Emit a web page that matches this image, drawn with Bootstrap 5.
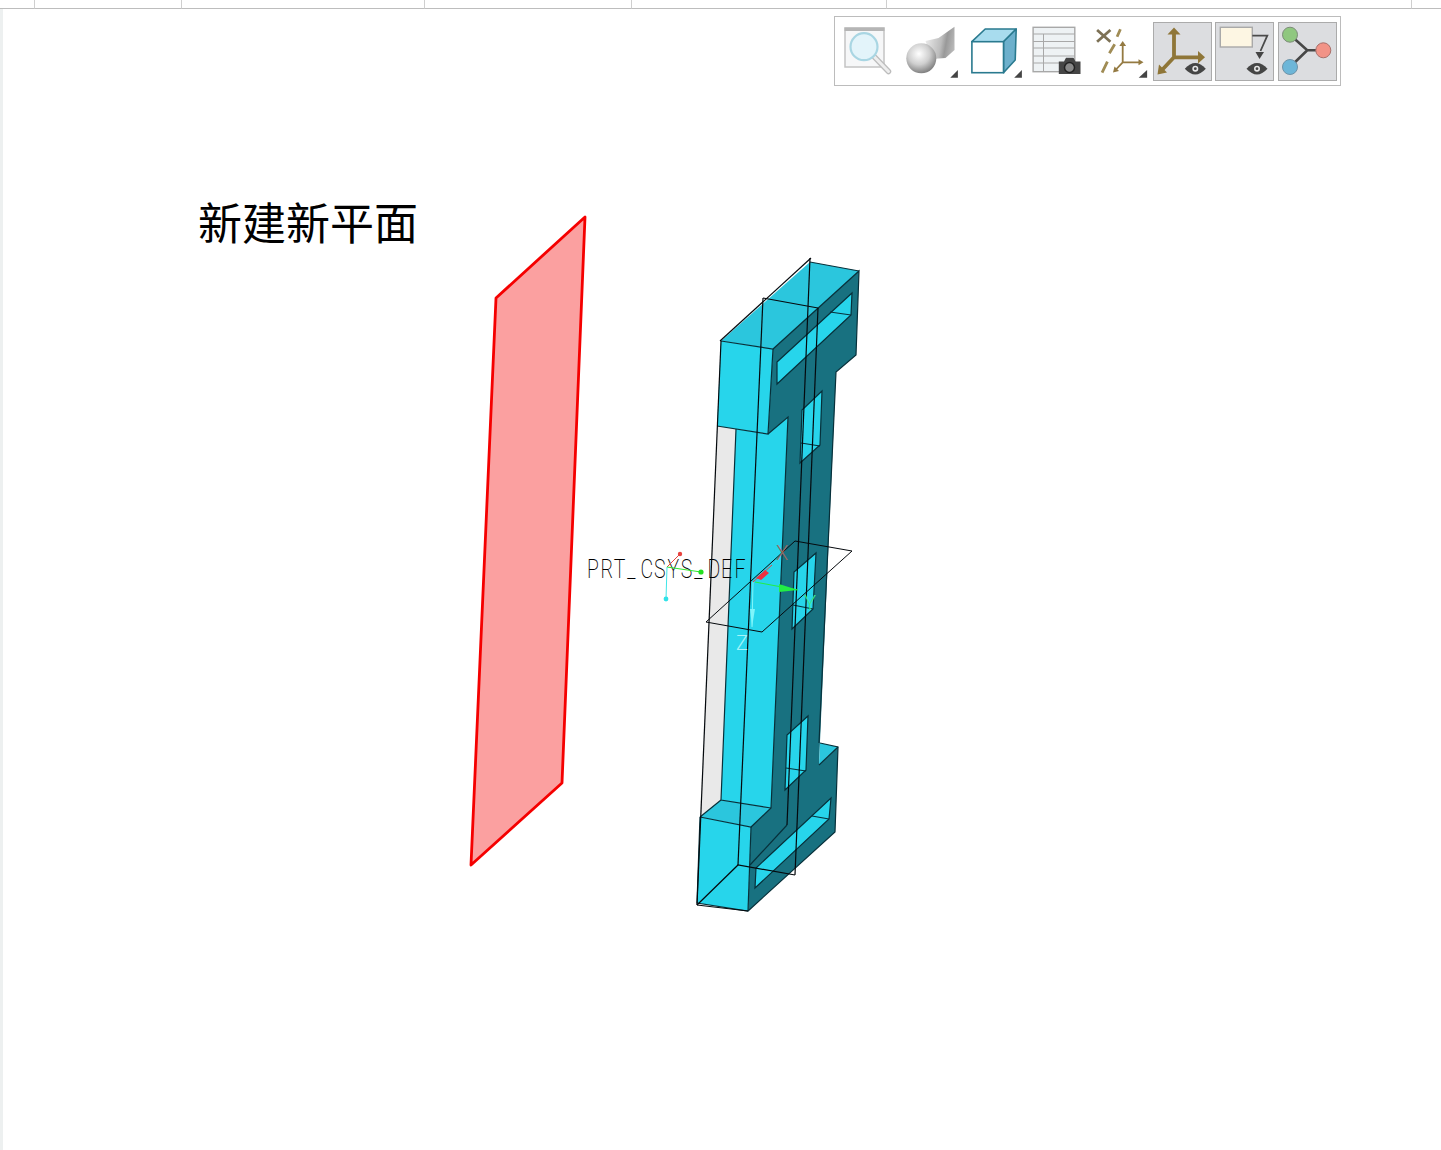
<!DOCTYPE html>
<html lang="zh">
<head>
<meta charset="utf-8">
<title>新建新平面</title>
<link href="https://cdn.jsdelivr.net/npm/bootstrap@5.3.0/dist/css/bootstrap.min.css" rel="stylesheet">
<style>
html,body{margin:0;background:#fff;overflow:hidden}
.sheet{width:1441px;height:1150px;font-family:"Noto Sans CJK SC","Liberation Sans",sans-serif}
.ruler-cell{height:9px;border-bottom:1px solid #bdbdbd;border-right:1px solid #cfcfcf;flex:none}
.ruler-rest{flex:1 1 auto;border-right:0}
.work-area{height:1141px;border-left:3px solid #edf0f0;padding-top:7px;padding-right:100px;z-index:1}
.tool-strip{width:507px;height:70px;border:1px solid #bcbcbc;padding:5px 3.5px 4px 6px;background:#fff;gap:3.4px;margin-left:auto}
.tool-btn{width:59px;height:59px;padding:0;border:1px solid transparent;border-radius:0;background:transparent;flex:none}
.tool-btn svg{display:block;width:59px;height:59px;margin:-1px}
.tool-btn.is-on{background:#dcdde0;border-color:#ababab}
.page-title{font-size:44px;line-height:1;font-weight:400;color:#000;margin:113px 0 0 195px;letter-spacing:0}
.scene{width:1441px;height:1150px;z-index:0}
.wire{fill:none;stroke:#05090d;stroke-width:1.2}
.edge{stroke:#07303a;stroke-width:1.2}
.csys-label{font-family:"Roboto","Liberation Sans",sans-serif;font-weight:200;font-size:25px;fill:#000}
.axis-letter{font-family:"Roboto","Liberation Sans",sans-serif;font-weight:300;font-size:20px}
</style>
</head>
<body>
<div class="sheet position-relative">
  <svg class="scene position-absolute top-0 start-0" viewBox="0 0 1441 1150" aria-label="3D model">
    <!-- datum plane -->
    <polygon points="496,298 585,217 562,783 471,865" fill="#fba0a0" stroke="#f50000" stroke-width="2.800" stroke-linejoin="round"/>

    <!-- part faces -->
    <polygon points="717,426 736,429 721,800 700,817" fill="#e9e9e9"/>
    <polygon points="736,429 768,434 788,417 771,808 721,800" fill="#27d5eb"/>
    <polygon points="773,349 859,271 856,355 836,372 819,765 838,747 835,832 748,911 751,827 771,808 788,417 768,434" fill="#187180"/>
    <polygon points="820,743 838,747 819,765" fill="#2bc6dd"/>
    <polygon points="721,341 810,262 859,271 773,349" fill="#2bc6dd"/>
    <polygon points="721,341 773,349 768,434 717,426" fill="#27d5eb"/>
    <polygon points="721,800 771,808 751,827 700,817" fill="#2bc6dd"/>
    <polygon points="700,817 751,827 748,911 697,903" fill="#27d5eb"/>
    <polygon points="777,362 852,293 851,315 777,384" fill="#27d5eb"/>
    <polygon points="822,391 820,445 800,463 802,410" fill="#27d5eb"/>
    <polygon points="816,553 813,609 792,629 794,572" fill="#27d5eb"/>
    <polygon points="808,716 806,770 785,790 787,735" fill="#27d5eb"/>
    <polygon points="831,798 829,819 755,888 756,868" fill="#27d5eb"/>

    <!-- model edges -->
    <g class="edge" fill="none">
      <polyline points="721,341 773,349 859,271 856,355 836,372 819,743"/>
      <polyline points="773,349 768,434 717,426"/>
      <polyline points="768,434 788,417 771,808 751,827 700,817"/>
      <polyline points="736,429 721,800 771,808"/>
      <polyline points="810,262 859,271"/>
      <polyline points="820,743 838,747 835,832 748,911 697,903 700,817"/>
      <polyline points="819,765 838,747"/>
      <line x1="751" y1="827" x2="748" y2="911"/>
      <line x1="721" y1="800" x2="700" y2="817"/>
      <polygon points="777,362 852,293 851,315 777,384"/>
      <polygon points="822,391 820,445 800,463 802,410"/>
      <polygon points="816,553 813,609 792,629 794,572"/>
      <polygon points="808,716 806,770 785,790 787,735"/>
      <polygon points="831,798 829,819 755,888 756,868"/>
      <line x1="830" y1="312" x2="851" y2="315"/>
      <line x1="801" y1="443" x2="820" y2="446"/>
      <line x1="793" y1="605" x2="813" y2="609"/>
      <line x1="786" y1="768" x2="806" y2="771"/>
      <line x1="812" y1="816" x2="829" y2="819"/>
      <line x1="750" y1="865" x2="787" y2="825"/>
    </g>

    <!-- wire outline of the tall datum -->
    <line x1="722" y1="338" x2="811" y2="257" stroke="#fff" stroke-width="1.6"/>
    <g class="wire">
      <polyline points="720,341 811,258"/>
      <polyline points="763,298 818,308"/>
      <polyline points="721,341 697,905"/>
      <polyline points="763,298 738,865"/>
      <polyline points="810,258 787,825"/>
      <polyline points="818,308 795,875"/>
      <polyline points="697,905 738,865 795,875"/>
      <polyline points="697,905 748,911"/>
      <polygon points="795,541 852,551 762,632 706,622" stroke-width="1"/>
    </g>

    <!-- first coordinate system -->
    <text class="csys-label" transform="translate(587 578) scale(.78 1)" x="0 17.180 34.360 51.540 68.720 85.900 103.080 120.260 137.440 154.620 171.800 188.980">PRT_CSYS_DEF</text>
    <line x1="667" y1="567" x2="680" y2="554" stroke="#e8433f"/>
    <line x1="667" y1="567" x2="701" y2="572" stroke="#2fe82f"/>
    <line x1="667" y1="567" x2="666" y2="599" stroke="#3fe6e8"/>
    <circle cx="680" cy="554" r="2.200" fill="#e8433f"/>
    <circle cx="701" cy="572" r="2.600" fill="#22e022"/>
    <circle cx="666" cy="599" r="2.400" fill="#2fe2e8"/>

    <!-- second coordinate system -->
    <line x1="753" y1="582" x2="772" y2="565" stroke="#e8433f"/>
    <polygon points="756,578 765,570 769,573 761,580" fill="#ef2f3f"/>
    <line x1="755" y1="582" x2="798" y2="590" stroke="#22ee44"/>
    <polygon points="779,584 798,590 779,592" fill="#22ee44"/>
    <line x1="753" y1="582" x2="752" y2="627" stroke="#7ff5fa"/>
    <polygon points="750,609 755,609 752,627" fill="#7ff5fa"/>
    <text class="axis-letter" x="776" y="560" fill="#9a6a60">X</text>
    <text class="axis-letter" x="804" y="610" fill="#3fe88f">Y</text>
    <text class="axis-letter" x="736" y="650" fill="#a4f4fa">Z</text>
  </svg>

  <div class="d-flex position-relative">
    <div class="ruler-cell" style="width:35px"></div>
    <div class="ruler-cell" style="width:147px"></div>
    <div class="ruler-cell" style="width:243px"></div>
    <div class="ruler-cell" style="width:207px"></div>
    <div class="ruler-cell" style="width:255px"></div>
    <div class="ruler-cell" style="width:525px"></div>
    <div class="ruler-cell ruler-rest"></div>
  </div>

  <div class="work-area position-relative">
    <div class="tool-strip d-flex">
      <button type="button" class="btn tool-btn" aria-label="zoom">
        <svg viewBox="2.500 0 59 59">
          <rect x="6.500" y="6" width="39" height="39" fill="#f6f7f8" stroke="#c4c4c4" stroke-width="1.500"/>
          <rect x="6" y="5.500" width="40" height="3.500" fill="#b5b5b5"/>
          <line x1="36" y1="35" x2="50" y2="49.500" stroke="#bdbdbd" stroke-width="5.500" stroke-linecap="round"/>
          <line x1="36" y1="35" x2="50" y2="49.500" stroke="#eeeeee" stroke-width="3" stroke-linecap="round"/>
          <circle cx="25.500" cy="24.700" r="13.500" fill="#e3f4fa" stroke="#a9d6e3" stroke-width="2.200"/>
        </svg>
      </button>
      <button type="button" class="btn tool-btn" aria-label="display">
        <svg viewBox="1.500 0 59 59">
          <defs>
            <radialGradient id="ballG" cx=".42" cy=".35" r=".72"><stop offset="0" stop-color="#ffffff"/><stop offset=".5" stop-color="#cfcfcf"/><stop offset="1" stop-color="#6f6f6f"/></radialGradient>
            <linearGradient id="blockG" x1="0" x2="1" y1=".3" y2=".5"><stop offset="0" stop-color="#ececec"/><stop offset=".55" stop-color="#bcbcbc"/><stop offset=".72" stop-color="#999"/><stop offset="1" stop-color="#b8b8b8"/></linearGradient>
          </defs>
          <polygon points="24,19 37,16 53,4.700 53,28 44,36 30,37" fill="url(#blockG)"/>
          <circle cx="19.800" cy="36.300" r="15" fill="url(#ballG)"/>
          <polygon points="48.800,55.700 56.400,48 56.400,55.700" fill="#444"/>
        </svg>
      </button>
      <button type="button" class="btn tool-btn" aria-label="view">
        <svg viewBox="1.500 0 59 59">
          <polygon points="7.400,19.700 20.700,7 51.700,7 39,19.700" fill="#a8dcee" stroke="#2a7a8f" stroke-width="1.600" stroke-linejoin="round"/>
          <polygon points="39,19.700 51.700,7 50.700,38 39,50.700" fill="#6db0cc" stroke="#2a7a8f" stroke-width="1.600" stroke-linejoin="round"/>
          <rect x="7.400" y="19.700" width="31.600" height="31" fill="#fff" stroke="#2a7a8f" stroke-width="1.600"/>
          <polygon points="49.700,55.700 57.400,48 57.400,55.700" fill="#444"/>
        </svg>
      </button>
      <button type="button" class="btn tool-btn" aria-label="table snapshot">
        <svg viewBox="1.500 0 59 59">
          <rect x="6.600" y="5.300" width="41.700" height="44.400" fill="#eef2f4" stroke="#a8a8a8" stroke-width="1.400"/>
          <path d="M6.600 12H48.300M6.600 19.500H48.300M6.600 26H48.300M6.600 34H48.300M6.600 41H48.300M17 12V49.700" fill="none" stroke="#a8a8a8"/>
          <path d="M32.300 39.500H37.500L39.500 35.700H47L49 39.500H54V52H32.300Z" fill="#454545"/>
          <circle cx="43" cy="45.500" r="5" fill="#888" stroke="#222" stroke-width="1.500"/>
        </svg>
      </button>
      <button type="button" class="btn tool-btn" aria-label="csys filters">
        <svg viewBox="1.500 0 59 59">
          <path d="M7.600 8L20.900 19.700M20.900 8L7.600 19.700" stroke="#7d7155" stroke-width="2.800" fill="none"/>
          <path d="M30.900 7.300L27.600 14.700M25.200 22.300L19.900 31.300M17.900 39.700L12.600 50.700" stroke="#a08c55" stroke-width="2.800" fill="none"/>
          <path d="M33.200 40.300V22M33.200 40.300H51M33.200 40.300L26 48" stroke="#947a42" stroke-width="1.800" fill="none"/>
          <polygon points="33.200,19 29.800,24 36.600,24" fill="#947a42"/>
          <polygon points="54,40.300 49,37.300 49,43.300" fill="#947a42"/>
          <polygon points="23.500,50.500 25,44.500 29.500,49" fill="#947a42"/>
          <polygon points="49.200,55.700 57.600,48 57.600,55.700" fill="#444"/>
        </svg>
      </button>
      <button type="button" class="btn tool-btn is-on" aria-label="csys display">
        <svg viewBox="0 0 59 59">
          <defs><g id="eyeMark"><path d="M-10.500 0Q0 -11.500 10.500 0Q0 11.500 -10.500 0Z" fill="#454545"/><circle r="3" fill="#e8e8e8"/><circle r="1.400" fill="#454545"/></g></defs>
          <path d="M21 35.300V11M21 35.300H46M21 35.300L9 48" stroke="#8f7638" stroke-width="3.800" fill="none"/>
          <polygon points="21,5.500 14.500,12.500 27.500,12.500" fill="#8f7638"/>
          <polygon points="52,35.300 45,29 45,41.500" fill="#8f7638"/>
          <polygon points="4.500,52.500 6,42.500 14,50.500" fill="#8f7638"/>
          <use href="#eyeMark" x="42.300" y="46.700"/>
        </svg>
      </button>
      <button type="button" class="btn tool-btn is-on" aria-label="annotation display">
        <svg viewBox="0 0 59 59">
          <rect x="5.300" y="5.300" width="32" height="19.700" fill="#fdf6e3" stroke="#a9a9a9" stroke-width="1.400"/>
          <path d="M37.300 13.700H52.300L45.500 29" fill="none" stroke="#4a4a4a" stroke-width="1.800"/>
          <polygon points="40.500,30 49,30 44.500,37" fill="#444"/>
          <use href="#eyeMark" x="42" y="46.700"/>
        </svg>
      </button>
      <button type="button" class="btn tool-btn is-on" aria-label="structure">
        <svg viewBox="0 0 59 59">
          <path d="M12 12.700L29.300 28.300L12 45M29.300 28.300H45.300" fill="none" stroke="#474747" stroke-width="2.600"/>
          <circle cx="12" cy="12.700" r="7.500" fill="#8fc77f" stroke="#7c8c78"/>
          <circle cx="45.300" cy="28.300" r="7.500" fill="#f29387" stroke="#a86f6a"/>
          <circle cx="12" cy="45" r="7.500" fill="#6db6d8" stroke="#6f93a8"/>
        </svg>
      </button>
    </div>
    <h1 class="page-title">新建新平面</h1>
  </div>
</div>
<script src="https://cdn.jsdelivr.net/npm/bootstrap@5.3.0/dist/js/bootstrap.bundle.min.js"></script>
</body>
</html>
